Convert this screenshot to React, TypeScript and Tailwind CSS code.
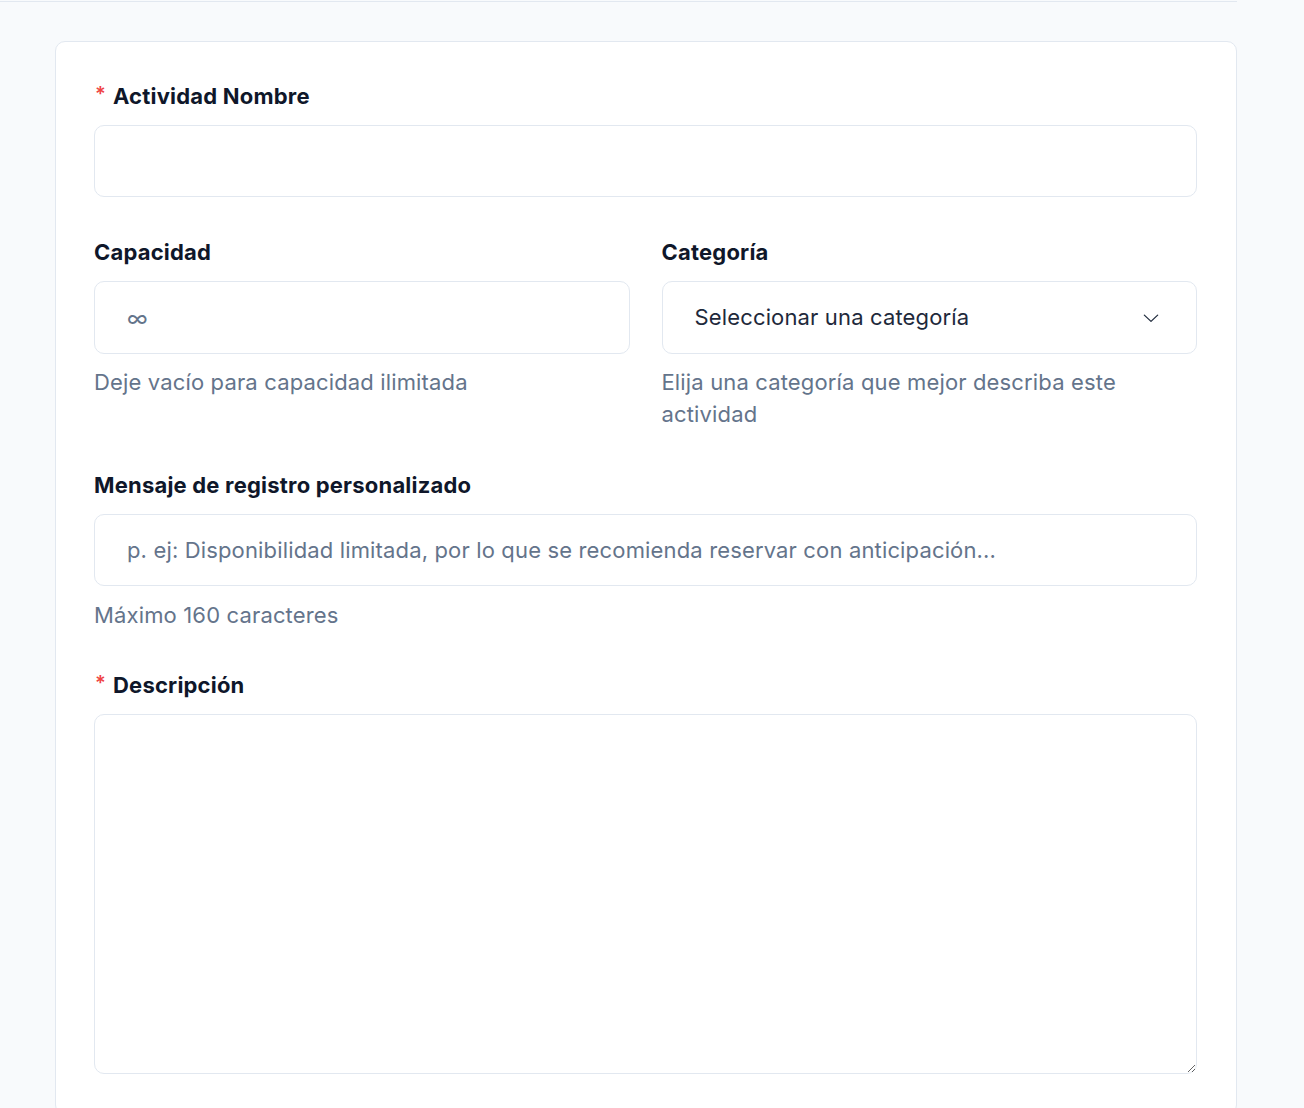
import React from "react";

function Label({ children, required }: { children: React.ReactNode; required?: boolean }) {
  return (
    <label className="flex items-center text-[22px] leading-[30px] font-bold text-[#0f172a] mb-[14px] tracking-[0.2px]">
      {required && <span className="text-[#ef4444] text-[20px] font-semibold mr-[7px] ml-[1px] leading-none -mt-[4px]">*</span>}
      {children}
    </label>
  );
}

export default function App() {
  return (
    <div className="min-h-[1108px] bg-[#f8fafc] flex" style={{ fontFamily: "Inter, 'Noto Sans', sans-serif" }}>
      <div className="w-[1237px]">
        <div className="h-px mt-px bg-[#e2e8f0]" />
        <div className="ml-[55px] mt-[39px] bg-white border border-[#e2e8f0] rounded-[10px] pl-[38px] pr-[39px] pt-[39px] pb-[40px]">
          <div className="flex flex-col">
            <Label required>Actividad Nombre</Label>
            <input
              className="h-[72px] w-full border border-[#e2e8f0] rounded-[10px] px-[32px] text-[22px] tracking-[0.15px] text-[#1e293b] outline-none"
              type="text"
            />
          </div>

          <div className="grid grid-cols-2 gap-[32px] mt-[40px]">
            <div className="flex flex-col">
              <Label>Capacidad</Label>
              <input
                className="h-[73px] w-full border border-[#e2e8f0] rounded-[10px] px-[32px] text-[22px] tracking-[0.15px] text-[#1e293b] placeholder:text-[#64748b] outline-none"
                placeholder="∞"
                type="text"
              />
              <p className="mt-[12px] text-[22px] leading-[32px] tracking-[0.15px] text-[#64748b]">Deje vacío para capacidad ilimitada</p>
            </div>
            <div className="flex flex-col">
              <Label>Categoría</Label>
              <div className="h-[73px] w-full border border-[#e2e8f0] rounded-[10px] pl-[32px] pr-[35px] flex items-center justify-between text-[22px] tracking-[0.15px] text-[#1e293b]">
                <span>Seleccionar una categoría</span>
                <svg width="20" height="20" viewBox="0 0 24 24" fill="none" stroke="#1e293b" strokeWidth="1.5" strokeLinecap="round" strokeLinejoin="round">
                  <path d="M4 8.5l8 7.5 8-7.5" />
                </svg>
              </div>
              <p className="mt-[12px] text-[22px] leading-[32px] tracking-[0.15px] text-[#64748b]">
                Elija una categoría que mejor describa este actividad
              </p>
            </div>
          </div>

          <div className="flex flex-col mt-[40px]">
            <Label>Mensaje de registro personalizado</Label>
            <input
              className="h-[72px] w-full border border-[#e2e8f0] rounded-[10px] px-[32px] text-[22px] tracking-[0.15px] text-[#1e293b] placeholder:text-[#64748b] outline-none"
              placeholder="p. ej: Disponibilidad limitada, por lo que se recomienda reservar con anticipación..."
              type="text"
            />
            <p className="mt-[13px] text-[22px] leading-[32px] tracking-[0.15px] text-[#64748b]">Máximo 160 caracteres</p>
          </div>

          <div className="flex flex-col mt-[39px]">
            <Label required>Descripción</Label>
            <textarea className="h-[360px] w-full border border-[#e2e8f0] rounded-[10px] px-[32px] py-[20px] text-[22px] text-[#1e293b] outline-none resize-y" />
          </div>
        </div>
      </div>
    </div>
  );
}
